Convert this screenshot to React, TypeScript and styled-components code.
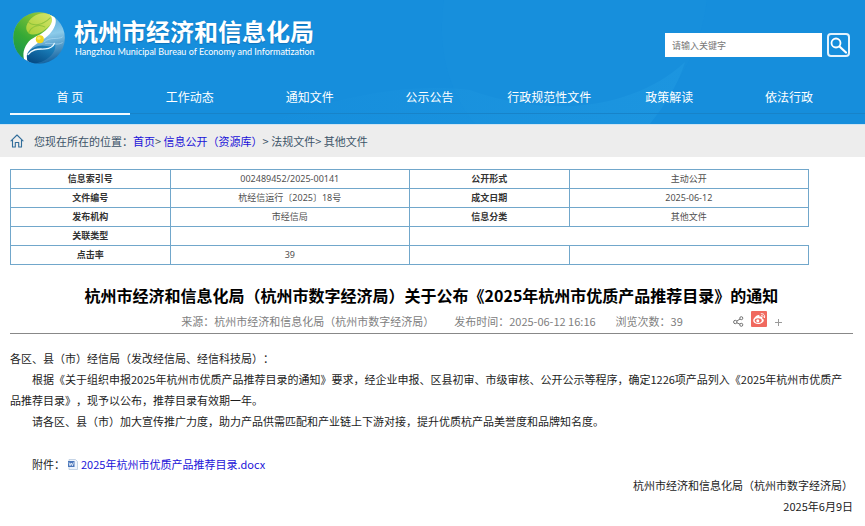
import React from "react";
import styled, { createGlobalStyle } from "styled-components";

const GlobalStyle = createGlobalStyle`
  *, *::before, *::after { box-sizing: border-box; }
  body {
    margin: 0;
    background: #fff;
    color: #1c1c1c;
    font-family: "Noto Sans CJK SC", sans-serif;
    font-size: 11px;
    line-height: 21px;
    text-spacing-trim: space-all;
  }
  a { color: #1a12d8; text-decoration: none; }
  button, input { font-family: inherit; }
`;

const Header = styled.header`
  position: relative;
  background: #168edc;
  color: #fff;
`;

const Swoosh = styled.svg`
  position: absolute;
  inset: 0;
  width: 100%;
  height: 100%;
`;

const Masthead = styled.div`
  position: relative;
  display: flex;
  align-items: center;
  justify-content: space-between;
  height: 76px;
  padding: 0 15px 0 13px;
`;

const Brand = styled.a`
  display: flex;
  align-items: center;
  gap: 9px;
  color: #fff;
`;

const BrandText = styled.span`
  display: flex;
  flex-direction: column;
  white-space: nowrap;
`;

const BrandName = styled.span`
  font-family: "Liberation Sans", "Noto Sans CJK SC", sans-serif;
  font-size: 24px;
  font-weight: 700;
  line-height: 27px;
  text-shadow: 0 1px 1px rgba(0, 50, 110, 0.3);
`;

const BrandEnglish = styled.span`
  padding-left: 1px;
  font-family: Lato, sans-serif;
  font-size: 9px;
  line-height: 11px;
`;

const SearchForm = styled.form`
  display: flex;
  align-items: center;
  gap: 5px;
  padding-top: 14px;
`;

const SearchInput = styled.input`
  width: 157px;
  height: 24px;
  padding: 0 7px;
  border: 0;
  background: #fff;
  color: #555;
  font-size: 9px;
  &::placeholder { color: #777; opacity: 1; }
`;

const SearchButton = styled.button`
  display: flex;
  align-items: center;
  justify-content: center;
  width: 23px;
  height: 24px;
  padding: 0;
  border: 2px solid #e4f3fd;
  border-radius: 4px;
  background: transparent;
  color: #fff;
`;

const Nav = styled.nav`
  position: relative;
  display: grid;
  grid-template-columns: repeat(7, 1fr);
  height: 48px;
  padding: 4px 16px 9px 10px;
`;

const NavLink = styled.a<{ $active?: boolean }>`
  display: flex;
  align-items: center;
  justify-content: center;
  border-bottom: 2px solid ${(p) => (p.$active ? "#f2faff" : "transparent")};
  color: #fff;
  font-size: 12px;
  white-space: nowrap;
`;

const Breadcrumb = styled.nav`
  display: flex;
  align-items: center;
  gap: 10px;
  height: 33px;
  padding: 0 10px;
  border-top: 1px solid #cfe4f2;
  background: #ededed;
  color: #3c5468;
`;

const Content = styled.main`
  padding: 12px 12px 8px 10px;
`;

const InfoTable = styled.table`
  width: calc(100% - 44px);
  table-layout: fixed;
  border-collapse: collapse;
  font-family: "Noto Sans", "Noto Sans CJK SC", sans-serif;
  font-size: 9px;
  line-height: 18px;
  text-align: center;
`;

const InfoCell = styled.td`
  height: 19px;
  padding: 0;
  border: 1px solid #71a7cb;
  color: #505050;
`;

const InfoHead = styled(InfoCell).attrs({ as: "th" })`
  color: #333;
  font-weight: 700;
`;

const Title = styled.h1`
  margin: 18px 0 0;
  font-size: 16px;
  font-weight: 700;
  line-height: 24px;
  color: #000;
  text-align: center;
`;

const Meta = styled.div`
  display: flex;
  align-items: center;
  justify-content: center;
  gap: 20px;
  height: 27px;
  padding: 2px 0 0 100px;
  border-bottom: 1px solid #888;
  color: #808080;
  white-space: nowrap;
`;

const ShareGroup = styled.div`
  display: flex;
  align-items: flex-end;
  gap: 7px;
  padding: 0 0 4px 30px;
`;

const IconButton = styled.button`
  display: flex;
  padding: 0;
  border: 0;
  background: none;
  color: #777;
`;

const Article = styled.article`
  padding-top: 14px;
`;

const Paragraph = styled.p<{ $indent?: boolean }>`
  margin: 0;
  text-indent: ${(p) => (p.$indent ? "2em" : "0")};
`;

const Attachment = styled.div`
  display: flex;
  align-items: center;
  margin-top: 22px;
  padding-left: 2em;
`;

const FileLink = styled.a`
  display: flex;
  align-items: center;
  gap: 3px;
  padding-left: 2px;
`;

const Signature = styled.footer`
  text-align: right;
`;

const LogoMark = () => (
  <svg width="52" height="52" viewBox="0 0 155 155" aria-hidden="true">
    <defs>
      <linearGradient id="globeGreen" x1="0" y1="1" x2="0.6" y2="0">
        <stop offset="0" stopColor="#0f8f58" />
        <stop offset="0.5" stopColor="#35a935" />
        <stop offset="1" stopColor="#8fc63a" />
      </linearGradient>
      <linearGradient id="globeBlue" x1="0.5" y1="0" x2="0.7" y2="1">
        <stop offset="0" stopColor="#3f9fd8" />
        <stop offset="0.45" stopColor="#8ccbea" />
        <stop offset="1" stopColor="#0d5d9c" />
      </linearGradient>
      <linearGradient id="leafLime" x1="0" y1="1" x2="1" y2="0">
        <stop offset="0" stopColor="#a8cf35" />
        <stop offset="1" stopColor="#d5e56c" />
      </linearGradient>
      <linearGradient id="leafSea" x1="0.8" y1="0" x2="0.2" y2="1">
        <stop offset="0" stopColor="#1f8ac6" />
        <stop offset="1" stopColor="#044983" />
      </linearGradient>
      <clipPath id="globeClip"><circle cx="77.5" cy="77.5" r="77" /></clipPath>
    </defs>
    <g clipPath="url(#globeClip)">
      <rect width="155" height="155" fill="url(#globeBlue)" />
      <path d="M0 0H112C140 20 125 50 90 75C55 95 30 110 36 155H0Z" fill="url(#globeGreen)" />
      <path d="M40 42C48 18 70 5 90 4C106 2 117 6 121 13C123 30 106 46 88 58C74 66 66 68 52 66C42 62 38 52 40 42Z" fill="url(#leafLime)" />
      <path d="M44 28C60 45 88 40 112 17M46 64C55 40 80 35 96 45" fill="none" stroke="#7dbb35" strokeWidth="3" opacity="0.7" />
      <path d="M105 4C138 10 131 42 110 65C96 81 58 99 46 118C36 132 42 146 55 153L38 153C28 135 28 113 43 93C54 76 78 72 96 56C116 40 126 18 105 4Z" fill="#fff" />
      <path d="M43 146C37 125 51 108 73 102C99 94 118 112 126 94C130 126 98 148 66 154C55 155 47 152 43 146Z" fill="url(#leafSea)" />
      <path d="M44 128C62 105 82 112 96 110C111 109 121 101 124 92" fill="none" stroke="#e8f8ff" strokeWidth="4" />
      <path d="M92 90C111 72 133 84 148 74M96 94C116 91 133 101 148 91" fill="none" stroke="#c5eaff" strokeWidth="2" opacity="0.7" />
      <circle cx="80" cy="81" r="12" fill="#efd51f" />
      <circle cx="77" cy="78" r="5" fill="#f8e968" />
    </g>
  </svg>
);

const SearchIcon = () => (
  <svg width="19" height="19" viewBox="0 0 19 19" fill="none" stroke="currentColor" aria-hidden="true">
    <circle cx="7" cy="7" r="4.5" strokeWidth="1.8" />
    <path d="M10.500 10.500L17 16.500" strokeWidth="2.200" strokeLinecap="round" />
  </svg>
);

const HomeIcon = () => (
  <svg width="14" height="14" viewBox="0 0 14 14" fill="none" stroke="#316d9a" strokeWidth="1.1" strokeLinejoin="round" strokeLinecap="round" aria-hidden="true">
    <path d="M1 6.800L7 1L13 6.800" />
    <path d="M2.500 6V13H5.300V8.500H8.700V13H11.500V6" />
  </svg>
);

const ShareIcon = () => (
  <svg width="11" height="12" viewBox="0 0 11 12" fill="none" stroke="#707070" strokeWidth="1" aria-hidden="true">
    <circle cx="2.300" cy="7" r="1.700" />
    <circle cx="8.300" cy="3.200" r="1.500" />
    <circle cx="8.300" cy="9.800" r="1.500" />
    <path d="M3.800 6.100L7 4M3.800 7.800L7 9.200" />
  </svg>
);

const WeiboIcon = () => (
  <svg width="16" height="16" viewBox="0 0 16 16" aria-hidden="true">
    <rect width="16" height="16" rx="1" fill="#f0695f" />
    <path d="M6.700 4.200C8.200 3.700 8.900 4.400 8.500 5.700C10.400 5.100 11.500 5.700 11 7.200C15 8.900 11.500 13 7.300 13C4.300 13 2.200 11.600 2.200 9.500C2.200 7.700 4.700 4.900 6.700 4.200Z" fill="#fff" />
    <ellipse cx="7.200" cy="9.500" rx="3.500" ry="2.300" fill="#f0695f" />
    <circle cx="6.800" cy="9.700" r="1.500" fill="#fff" />
    <path d="M10.200 2.700C12.700 2.300 14.200 4.300 13.500 6.600M10.700 4.500C11.900 4.400 12.300 5.100 12 6.100" fill="none" stroke="#fff" strokeLinecap="round" />
  </svg>
);

const PlusIcon = () => (
  <svg width="8" height="9" viewBox="0 0 8 9" stroke="#9a9a9a" aria-hidden="true">
    <path d="M4.500 1V8M1 4.500H8" />
  </svg>
);

const WordIcon = () => (
  <svg width="11" height="11" viewBox="0 0 11 11" aria-hidden="true">
    <path d="M2 0.500H8.500L10.500 2.500V10.500H2Z" fill="#eef4fc" stroke="#b9cae0" strokeWidth="0.800" />
    <rect x="1" y="2" width="6.500" height="6" fill="#4a76ba" />
    <path d="M2 3.500L3 6.700L4.200 4L5.400 6.700L6.500 3.500" fill="none" stroke="#fff" strokeWidth="0.800" />
  </svg>
);

const navItems = ["首 页", "工作动态", "通知文件", "公示公告", "行政规范性文件", "政策解读", "依法行政"];

const infoRows = [
  ["信息索引号", "002489452/2025-00141", "公开形式", "主动公开"],
  ["文件编号", "杭经信运行〔2025〕18号", "成文日期", "2025-06-12"],
  ["发布机构", "市经信局", "信息分类", "其他文件"],
  ["关联类型", ""],
  ["点击率", "39", "", ""],
];

export default function App() {
  return (
    <>
      <GlobalStyle />
      <Header>
        <Swoosh viewBox="0 0 865 124" preserveAspectRatio="none" aria-hidden="true">
          <defs>
            <linearGradient id="swooshFade" x1="0" y1="0" x2="1" y2="0">
              <stop offset="0" stopColor="#219be3" stopOpacity="0" />
              <stop offset="1" stopColor="#219be3" stopOpacity="0.5" />
            </linearGradient>
          </defs>
          <path d="M444 0C438 40 444 85 475 124H650C675 85 700 55 707 0Z" fill="#1a91df" opacity="0.3" />
          <path d="M260 124C330 100 400 82 470 90C560 122 640 104 685 62C678 85 665 105 650 124Z" fill="url(#swooshFade)" />
          <path d="M10 113.500H865" stroke="#1783c9" />
        </Swoosh>
        <Masthead>
          <Brand href="#">
            <LogoMark />
            <BrandText>
              <BrandName>杭州市经济和信息化局</BrandName>
              <BrandEnglish>Hangzhou Municipal Bureau of Economy and Informatization</BrandEnglish>
            </BrandText>
          </Brand>
          <SearchForm role="search" onSubmit={(e) => e.preventDefault()}>
            <SearchInput type="text" placeholder="请输入关键字" aria-label="请输入关键字" />
            <SearchButton type="submit" aria-label="搜索"><SearchIcon /></SearchButton>
          </SearchForm>
        </Masthead>
        <Nav>
          {navItems.map((item, i) => (
            <NavLink key={item} href="#" $active={i === 0}>{item}</NavLink>
          ))}
        </Nav>
      </Header>
      <Breadcrumb>
        <HomeIcon />
        <span>
          您现在所在的位置：<a href="#">首页</a>&gt; <a href="#">信息公开（资源库）</a>&gt; 法规文件&gt; 其他文件
        </span>
      </Breadcrumb>
      <Content>
        <InfoTable>
          <colgroup>
            <col width="20%" />
            <col width="30%" />
            <col width="20%" />
            <col width="30%" />
          </colgroup>
          <tbody>
            {infoRows.map((row) => (
              <tr key={row[0]}>
                {row.map((text, i) =>
                  i % 2 === 0 && text ? (
                    <InfoHead key={i} scope="row">{text}</InfoHead>
                  ) : (
                    <InfoCell key={i}>{text}</InfoCell>
                  )
                )}
              </tr>
            ))}
          </tbody>
        </InfoTable>
        <Title>杭州市经济和信息化局（杭州市数字经济局）关于公布《2025年杭州市优质产品推荐目录》的通知</Title>
        <Meta>
          <span>来源：杭州市经济和信息化局（杭州市数字经济局）</span>
          <span>发布时间：2025-06-12 16:16</span>
          <span>浏览次数：39</span>
          <ShareGroup>
            <IconButton type="button" aria-label="分享"><ShareIcon /></IconButton>
            <IconButton type="button" aria-label="分享到微博"><WeiboIcon /></IconButton>
            <IconButton type="button" aria-label="更多"><PlusIcon /></IconButton>
          </ShareGroup>
        </Meta>
        <Article>
          <Paragraph>各区、县（市）经信局（发改经信局、经信科技局）：</Paragraph>
          <Paragraph $indent>
            根据《关于组织申报2025年杭州市优质产品推荐目录的通知》要求，经企业申报、区县初审、市级审核、公开公示等程序，确定1226项产品列入《2025年杭州市优质产品推荐目录》，现予以公布，推荐目录有效期一年。
          </Paragraph>
          <Paragraph $indent>
            请各区、县（市）加大宣传推广力度，助力产品供需匹配和产业链上下游对接，提升优质杭产品美誉度和品牌知名度。
          </Paragraph>
          <Attachment>
            <span>附件：</span>
            <FileLink href="#"><WordIcon />2025年杭州市优质产品推荐目录.docx</FileLink>
          </Attachment>
          <Signature>
            <Paragraph>杭州市经济和信息化局（杭州市数字经济局）</Paragraph>
            <Paragraph>2025年6月9日</Paragraph>
          </Signature>
        </Article>
      </Content>
    </>
  );
}
